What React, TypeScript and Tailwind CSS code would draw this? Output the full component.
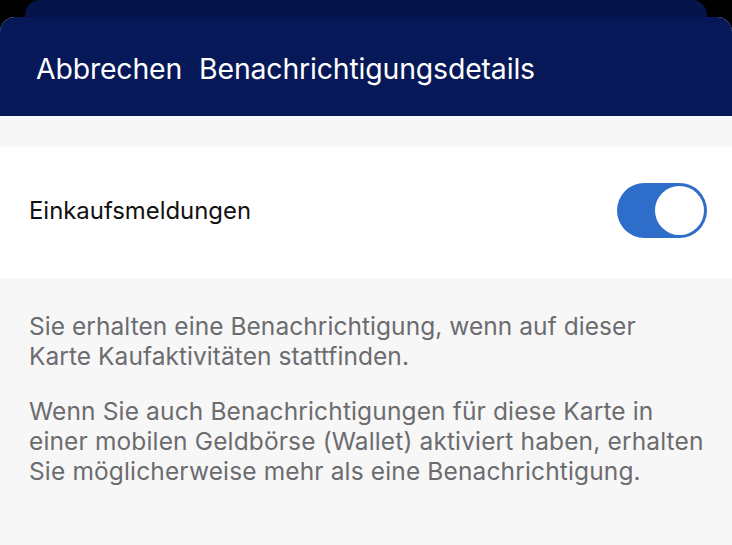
export default function App() {
  return (
    <div
      className="w-[732px] h-[545px] overflow-hidden bg-black"
      style={{ fontFamily: "Inter, 'Noto Sans', sans-serif" }}
    >
      {/* hinteres Blatt */}
      <div className="mx-[25px] h-[17px] rounded-t-[15px] bg-[#06144c]" />

      {/* vorderes Blatt */}
      <div className="rounded-t-[15px] bg-[#f7f7f7] overflow-hidden h-[528px]">
        <div className="h-[99px] bg-[#061857] flex items-end pb-[33px] pl-[36px] gap-[17px] text-white text-[28.4px] tracking-[-0.15px] leading-none">
          <span className="font-normal">Abbrechen</span>
          <span className="font-normal">Benachrichtigungsdetails</span>
        </div>

        <div className="h-[31px]" />

        <div className="h-[131px] bg-white flex items-center justify-between pl-[29px] pr-[25px] pb-[4px]">
          <span className="text-[23.9px] text-[#111]">Einkaufsmeldungen</span>
          <div className="w-[90px] h-[55px] rounded-full bg-[#2e6dca] flex items-center justify-end p-[3px]">
            <div className="w-[49px] h-[49px] rounded-full bg-white" />
          </div>
        </div>

        <div className="pl-[29px] pt-[33px] text-[24.5px] leading-[30px] text-[#6c6c70]">
          <p className="tracking-[0.05px]">
            Sie erhalten eine Benachrichtigung, wenn auf dieser
            <br />
            Karte Kaufaktivitäten stattfinden.
          </p>
          <p className="mt-[25px] w-[760px] tracking-[0.14px]">
            Wenn Sie auch Benachrichtigungen für diese Karte in
            <br />
            einer mobilen Geldbörse (Wallet) aktiviert haben, erhalten
            <br />
            Sie möglicherweise mehr als eine Benachrichtigung.
          </p>
        </div>
      </div>
    </div>
  );
}
